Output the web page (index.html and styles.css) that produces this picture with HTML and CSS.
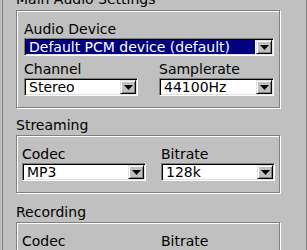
FILE: index.html
```html
<!DOCTYPE html>
<html lang="en">
<head>
    <meta charset="UTF-8">
    <title>Audio Settings</title>
    <link rel="stylesheet" href="styles.css">
</head>
<body>
    <div class="page">
        <section class="group">
            <h2 class="group-title">Main Audio Settings</h2>
            <div class="group-box main-box">
                <div class="field">
                    <label>Audio Device</label>
                    <div class="combo selected">
                        <span class="combo-value">Default PCM device (default)</span>
                        <span class="combo-arrow"><svg width="9" height="5" viewBox="0 0 9 5"><path d="M0 0h9L4.5 5z" fill="#000"/></svg></span>
                    </div>
                </div>
                <div class="row main-row">
                    <div class="field">
                        <label>Channel</label>
                        <div class="combo">
                            <span class="combo-value">Stereo</span>
                            <span class="combo-arrow"><svg width="9" height="5" viewBox="0 0 9 5"><path d="M0 0h9L4.5 5z" fill="#000"/></svg></span>
                        </div>
                    </div>
                    <div class="field">
                        <label>Samplerate</label>
                        <div class="combo">
                            <span class="combo-value">44100Hz</span>
                            <span class="combo-arrow"><svg width="9" height="5" viewBox="0 0 9 5"><path d="M0 0h9L4.5 5z" fill="#000"/></svg></span>
                        </div>
                    </div>
                </div>
            </div>
        </section>

        <section class="group streaming">
            <h2 class="group-title">Streaming</h2>
            <div class="group-box codec-box">
                <div class="row codec-row">
                    <div class="field">
                        <label>Codec</label>
                        <div class="combo">
                            <span class="combo-value">MP3</span>
                            <span class="combo-arrow"><svg width="9" height="5" viewBox="0 0 9 5"><path d="M0 0h9L4.5 5z" fill="#000"/></svg></span>
                        </div>
                    </div>
                    <div class="field">
                        <label>Bitrate</label>
                        <div class="combo">
                            <span class="combo-value">128k</span>
                            <span class="combo-arrow"><svg width="9" height="5" viewBox="0 0 9 5"><path d="M0 0h9L4.5 5z" fill="#000"/></svg></span>
                        </div>
                    </div>
                </div>
            </div>
        </section>

        <section class="group recording">
            <h2 class="group-title">Recording</h2>
            <div class="group-box codec-box">
                <div class="row codec-row">
                    <div class="field">
                        <label>Codec</label>
                        <div class="combo">
                            <span class="combo-value">WAV</span>
                            <span class="combo-arrow"><svg width="9" height="5" viewBox="0 0 9 5"><path d="M0 0h9L4.5 5z" fill="#000"/></svg></span>
                        </div>
                    </div>
                    <div class="field">
                        <label>Bitrate</label>
                        <div class="combo">
                            <span class="combo-value">128k</span>
                            <span class="combo-arrow"><svg width="9" height="5" viewBox="0 0 9 5"><path d="M0 0h9L4.5 5z" fill="#000"/></svg></span>
                        </div>
                    </div>
                </div>
            </div>
        </section>
    </div>
</body>
</html>
```

FILE: styles.css
```css
* {
    margin: 0;
    padding: 0;
    box-sizing: border-box;
}

html, body {
    height: 250px;
    overflow: hidden;
}

body {
    background: #c0c0c0;
    color: #000;
    font-family: "DejaVu Sans", sans-serif;
    font-size: 14px;
    line-height: 16px;
}

.page {
    margin-left: 2px;
    width: 305px;
    height: 270px;
    border-left: 1px solid #808080;
    border-right: 1px solid #808080;
    padding: 0 26px 0 13px;
    margin-top: -9px;
}

.group-title {
    font-size: 14px;
    font-weight: normal;
    line-height: 16px;
    height: 18px;
}

.group:first-child .group-title {
    height: 19px;
}

.group-box {
    border: 1px solid #808080;
    box-shadow: 1px 1px 0 #fff, inset 1px 1px 0 #fff;
}

.main-box {
    padding: 10px 5px 11px 7px;
}

.codec-box {
    padding: 10px 5px 11px 5px;
}

.group.streaming {
    margin-top: 9px;
}

.group.recording {
    margin-top: 11px;
}

.field label {
    display: block;
    height: 17px;
}

.row {
    display: grid;
}

.main-row {
    margin-top: 5px;
    grid-template-columns: 114px 115px;
    column-gap: 21px;
}

.codec-row {
    grid-template-columns: 124px 114px;
    column-gap: 15px;
}

.combo {
    display: flex;
    height: 18px;
    background: #fff;
    border-top: 1px solid #808080;
    border-left: 1px solid #808080;
    border-bottom: 1px solid #fff;
    border-right: 1px solid #fff;
    box-shadow: inset 1px 1px 0 #000, inset -1px -1px 0 #dfdfdf;
    padding: 1px;
}

.combo-value {
    flex: 1;
    padding-left: 3px;
    line-height: 15px;
    white-space: nowrap;
    overflow: hidden;
}

.combo.selected .combo-value {
    background: #000080;
    color: #fff;
}

.combo-arrow {
    width: 16px;
    margin-left: 1px;
    background: #c0c0c0;
    border-top: 1px solid #dfdfdf;
    border-left: 1px solid #dfdfdf;
    border-right: 1px solid #000;
    border-bottom: 1px solid #000;
    box-shadow: inset 1px 1px 0 #fff, inset -1px -1px 0 #808080;
    display: flex;
    align-items: center;
    justify-content: center;
}
```
